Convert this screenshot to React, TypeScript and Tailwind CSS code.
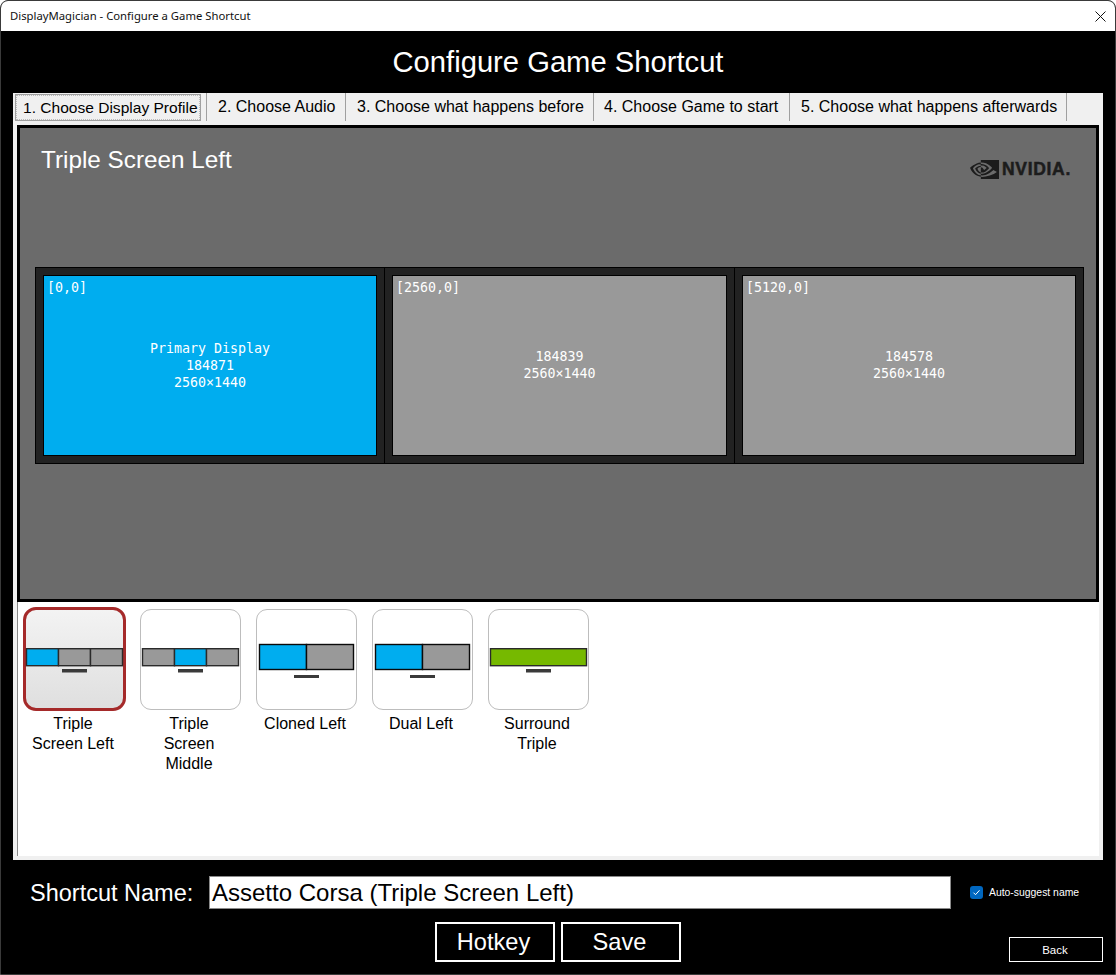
import { SiNvidia } from "react-icons/si";

const sans = "font-['Liberation_Sans',Arial,sans-serif]";

function Thumb({ kind }: { kind: "l" | "m" | "cl" | "dl" | "s" }) {
  const blue = "#00adef";
  const gray = "#999999";
  const line = "#2a2a2a";
  let body;
  if (kind === "l" || kind === "m") {
    const fills = kind === "l" ? [blue, gray, gray] : [gray, blue, gray];
    body = (
      <>
        {fills.map((f, i) => (
          <rect key={i} x={2.5 + i * 32} y="39.7" width="32" height="17" fill={f} stroke={line} strokeWidth="1.4" />
        ))}
        <rect x="38" y="60" width="25" height="3.5" fill="#3a3a3a" />
      </>
    );
  } else if (kind === "s") {
    body = (
      <>
        <rect x="2.5" y="39.7" width="96" height="17" fill="#76b900" stroke={line} strokeWidth="1.4" />
        <rect x="38" y="60" width="25" height="3.5" fill="#3a3a3a" />
      </>
    );
  } else {
    body = (
      <>
        <rect x="3.5" y="35.5" width="47" height="25" fill={blue} stroke="#0a0a0a" strokeWidth="1.4" />
        <rect x="50.5" y="35.5" width="47" height="25" fill={gray} stroke="#0a0a0a" strokeWidth="1.4" />
        <rect x="38" y="66" width="25" height="3" fill="#3a3a3a" />
      </>
    );
  }
  return (
    <svg width="101" height="101" viewBox="0 0 101 101" className="block">
      {body}
    </svg>
  );
}

const items = [
  { kind: "l", label: "Triple Screen Left", selected: true },
  { kind: "m", label: "Triple Screen Middle" },
  { kind: "cl", label: "Cloned Left" },
  { kind: "dl", label: "Dual Left" },
  { kind: "s", label: "Surround Triple" },
] as const;

function Screen({ pos, lines, primary }: { pos: string; lines: string[]; primary?: boolean }) {
  return (
    <div className="border-r border-black last:border-r-0 p-[7px] h-full">
      <div className={`relative h-full border border-black flex flex-col items-center justify-center text-white ${primary ? "bg-[#00adef]" : "bg-[#999999] pb-[2px]"}`}>
        <span className="absolute left-[3px] top-[3px] leading-[17px]">{pos}</span>
        {lines.map((l) => (
          <span key={l} className="leading-[17px]">{l}</span>
        ))}
      </div>
    </div>
  );
}

export default function App() {
  const tabs = [
    { t: "2. Choose Audio", c: "w-[140px] pl-[11px] border-l" },
    { t: "3. Choose what happens before", c: "w-[248px] pl-[11px]" },
    { t: "4. Choose Game to start", c: "w-[196px] pl-[10px]" },
    { t: "5. Choose what happens afterwards", c: "w-[277px] pl-[11px]" },
  ];
  return (
    <div className={`w-[1116px] h-[975px] bg-black border border-[#3a3a3a] rounded-t-[8px] overflow-hidden flex flex-col ${sans}`}>
      <div className="h-[30px] bg-white flex items-center justify-between pl-[9px] pr-[8px] shrink-0">
        <span className="font-['Noto_Sans',sans-serif] text-[11.3px] text-[#111]">DisplayMagician - Configure a Game Shortcut</span>
        <svg width="11" height="11" viewBox="0 0 11 11" className="mr-[1px]">
          <path d="M0.5 0.5L10.5 10.5M10.5 0.5L0.5 10.5" stroke="#111" strokeWidth="1" fill="none" />
        </svg>
      </div>
      <h1 className="h-[62px] pt-[2px] shrink-0 flex items-center justify-center text-white text-[29.2px]">Configure Game Shortcut</h1>

      <div className="ml-[12px] w-[1090px] h-[767px] bg-[#f0f0f0] shrink-0 flex flex-col">
        <div className="h-[29px] flex text-[16px] text-black pl-[2px] shrink-0">
          <div className="mt-[1px] h-[27px] w-[186px] mr-[5px] border border-[#a0a0a0] outline-1 outline-dotted -outline-offset-2 outline-[#bbb] flex items-center pl-[7px] whitespace-nowrap text-[15.55px]">
            1. Choose Display Profile
          </div>
          {tabs.map(({ t, c }) => (
            <div key={t} className={`h-[28px] border-r border-[#a0a0a0] flex items-center whitespace-nowrap ${c}`}>
              {t}
            </div>
          ))}
        </div>
        <div className="mt-[3px] ml-[4px] w-[1082px] h-[477px] shrink-0 border-[3px] border-black bg-[#6b6b6b] flex flex-col">
          <div className="h-[139px] shrink-0 flex items-start justify-between pl-[21px] pr-[25px]">
            <span className="mt-[17px] text-[24.3px] leading-[30px] text-white">Triple Screen Left</span>
            <div className="mt-[32px] h-[19px] flex items-center gap-[3px] text-[#1c1c1c]">
              <SiNvidia className="w-[29px] h-[29px] shrink-0" />
              <span className="text-[17.5px] font-bold leading-[19px] tracking-[0.7px] [-webkit-text-stroke:0.5px_#1c1c1c]">NVIDIA.</span>
            </div>
          </div>
          <div className="ml-[15px] w-[1049px] h-[197px] border border-black bg-[#222222] grid grid-cols-[349px_350px_348px] font-['DejaVu_Sans_Mono',monospace] text-[13.3px]">
            <Screen pos="[0,0]" lines={["Primary Display", "184871", "2560×1440"]} primary />
            <Screen pos="[2560,0]" lines={["184839", "2560×1440"]} />
            <Screen pos="[5120,0]" lines={["184578", "2560×1440"]} />
          </div>
        </div>
        <div className="ml-[4px] w-[1082px] h-[254px] bg-white border-l border-[#8a8a8a] flex items-start pt-[7px] pl-[6px] gap-[15px] shrink-0">
          {items.map((it) => (
            <div key={it.label} className="w-[101px] flex flex-col items-center">
              <div className={"selected" in it
                ? "w-[103px] h-[104px] -ml-[1px] -mr-[1px] -mt-[2px] -mb-[1px] rounded-[13px] border-[3px] border-[#a52a2a] bg-gradient-to-b from-[#f3f3f3] to-[#dfdfdf] flex items-center justify-center"
                : "w-[101px] h-[101px] rounded-[11px] border border-[#bdbdbd] flex items-center justify-center overflow-hidden"}>
                <div className="shrink-0">
                  <Thumb kind={it.kind} />
                </div>
              </div>
              <div className="w-[92px] mr-[3px] mt-[4px] text-center text-[16px] leading-[20px] text-black">{it.label}</div>
            </div>
          ))}
        </div>
      </div>

      <div className="mt-[16px] h-[33px] flex items-center shrink-0 pl-[29px]">
        <span className="w-[179px] pt-[2px] text-white text-[23.5px]">Shortcut Name:</span>
        <div className="w-[742px] h-[33px] bg-white border border-[#8a8a8a] text-[24px] text-black flex items-center pl-[2px] whitespace-nowrap">
          Assetto Corsa (Triple Screen Left)
        </div>
        <div className="ml-[19px] w-[13px] h-[13px] rounded-[3px] bg-[#0067c0] flex items-center justify-center">
          <svg width="9" height="9" viewBox="0 0 9 9"><path d="M1.5 4.7L3.5 6.7L7.5 2.3" stroke="#fff" strokeWidth="1" fill="none" /></svg>
        </div>
        <span className="ml-[6px] text-[10.4px] text-white whitespace-nowrap">Auto-suggest name</span>
      </div>
      <div className="mt-[13px] h-[40px] flex shrink-0 pl-[434px] pr-[12px]">
        <div className="w-[120px] h-[40px] pt-[2px] pr-[3px] border-2 border-white text-white text-[23.6px] flex items-center justify-center">Hotkey</div>
        <div className="ml-[6px] w-[120px] h-[40px] pt-[2px] pr-[3px] border-2 border-white text-white text-[23.6px] flex items-center justify-center">Save</div>
        <div className="ml-auto self-end w-[94px] h-[25px] pt-[2px] pr-[2px] border border-white text-white text-[11.5px] flex items-center justify-center">Back</div>
      </div>
    </div>
  );
}
